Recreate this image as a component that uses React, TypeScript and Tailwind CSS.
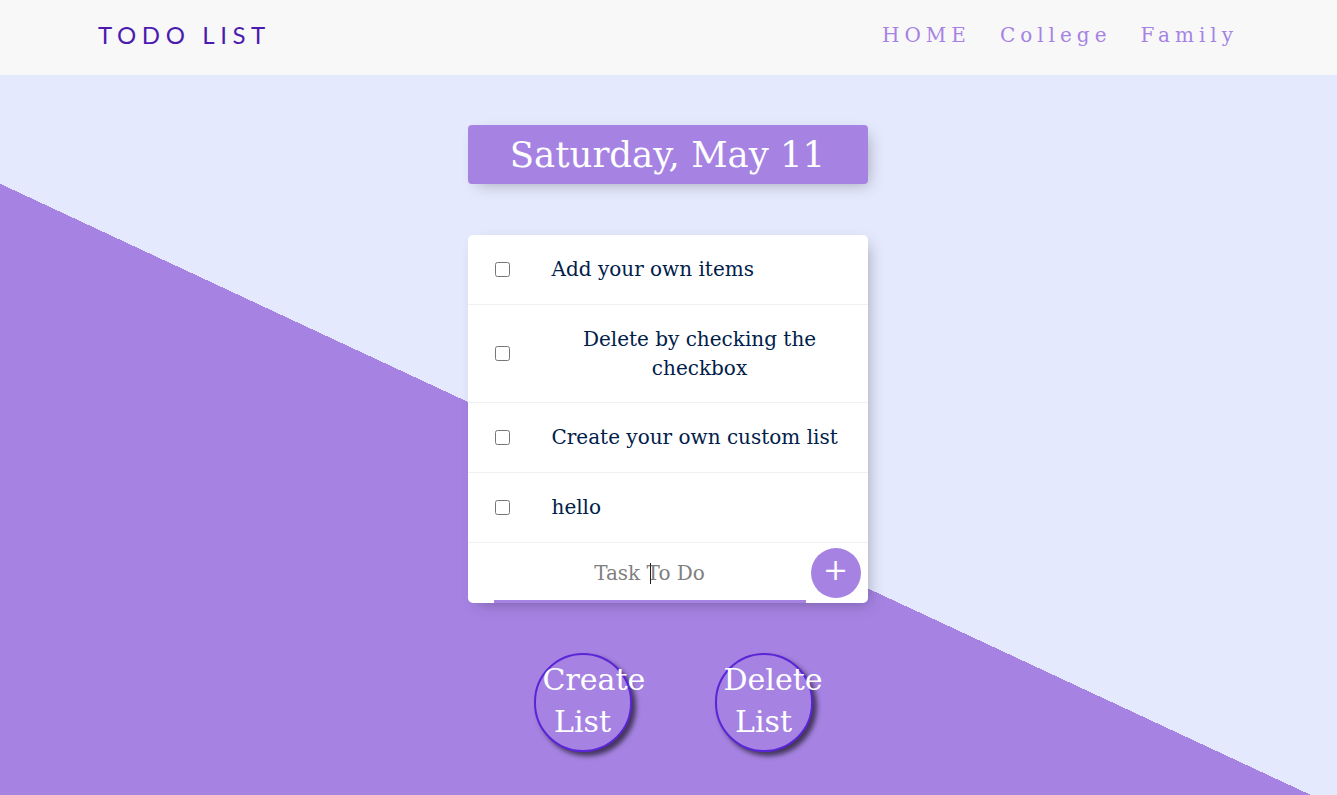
import { useState } from 'react';

const serif = "font-['DejaVu_Serif',serif]";

type Item = { id: number; text: string };

const initialItems: Item[] = [
  { id: 1, text: 'Add your own items' },
  { id: 2, text: 'Delete by checking the checkbox' },
  { id: 3, text: 'Create your own custom list' },
  { id: 4, text: 'hello' },
];

function Header() {
  return (
    <header className="h-[75px] shrink-0 bg-[#f8f8f8] flex items-center justify-between pl-[98px] pr-[99px] pb-[6px]">
      <a className="font-['Lato',sans-serif] text-[24px] tracking-[5.6px] text-[#4b1bb0] leading-none">
        TODO LIST
      </a>
      <nav className={`${serif} flex items-center gap-[29px] text-[20px] tracking-[5px] text-[#a683e3] leading-none`}>
        <a>HOME</a>
        <a>College</a>
        <a>Family</a>
      </nav>
    </header>
  );
}

function TodoRow({ item }: { item: Item }) {
  return (
    <div className="min-h-[70px] flex items-center border-b border-[#f1f1f1]">
      <input type="checkbox" className="m-0 ml-[27px] mr-[22px] w-[15px] h-[15px] shrink-0" />
      <p className="m-0 px-[20px] py-[20px] text-center text-[20px] leading-[28.5px] text-[#00204a]">
        {item.text}
      </p>
    </div>
  );
}

function ListButton({ label }: { label: string }) {
  return (
    <button className="w-[98px] h-[99px] rounded-full border-2 border-[#5a25d6] bg-[#a683e3] text-white text-[30px] leading-[42px] px-[7px] pb-[4px] shadow-[4px_4px_5px_rgba(0,0,0,0.6)]">
      <div className="w-full text-center">
        {label}
        <br />
        List
      </div>
    </button>
  );
}

export default function App() {
  const [items] = useState(initialItems);

  return (
    <div className={`${serif} w-full h-[795px] overflow-hidden flex flex-col`}>
      <Header />

      <main className="flex-1 flex flex-col items-center bg-[#e4e9fd] bg-[linear-gradient(25deg,#a683e3_45.5%,#e4e9fd_45.5%)]">
        {/* ── Date heading ── */}
        <div className="mt-[50px] -translate-x-px w-[400px] h-[59px] rounded-[4px] bg-[#a683e3] flex items-center justify-center shadow-[5px_5px_15px_-5px_rgba(0,0,0,0.3)]">
          <h1 className="text-[35.5px] leading-none text-white font-normal">Saturday, May 11</h1>
        </div>

        {/* ── List box ── */}
        <div className="mt-[51px] -translate-x-px w-[400px] rounded-[5px] bg-white shadow-[5px_5px_15px_-5px_rgba(0,0,0,0.3)]">
          {items.map((item) => (
            <TodoRow key={item.id} item={item} />
          ))}
          <form className="h-[60px] flex items-center" onSubmit={(e) => e.preventDefault()}>
            <div className="relative ml-[26px]">
              <input
                type="text"
                placeholder="Task To Do"
                className="w-[312px] h-[60px] text-center text-[20px] bg-transparent outline-none shadow-[inset_0_-3px_0_0_#a683e3] placeholder:text-[#808080] placeholder:opacity-100"
              />
              <span className="absolute left-[156px] top-[20px] w-px h-[21px] bg-[#222]" />
            </div>
            <button
              type="submit"
              className="ml-[5px] w-[50px] h-[50px] rounded-full bg-[#a683e3] text-white text-[30px] leading-none pb-[6px] flex items-center justify-center"
            >
              +
            </button>
          </form>
        </div>

        {/* ── List actions ── */}
        <div className="mt-[50px] flex gap-[83px] pl-[9px]">
          <ListButton label="Create" />
          <ListButton label="Delete" />
        </div>
      </main>
    </div>
  );
}
